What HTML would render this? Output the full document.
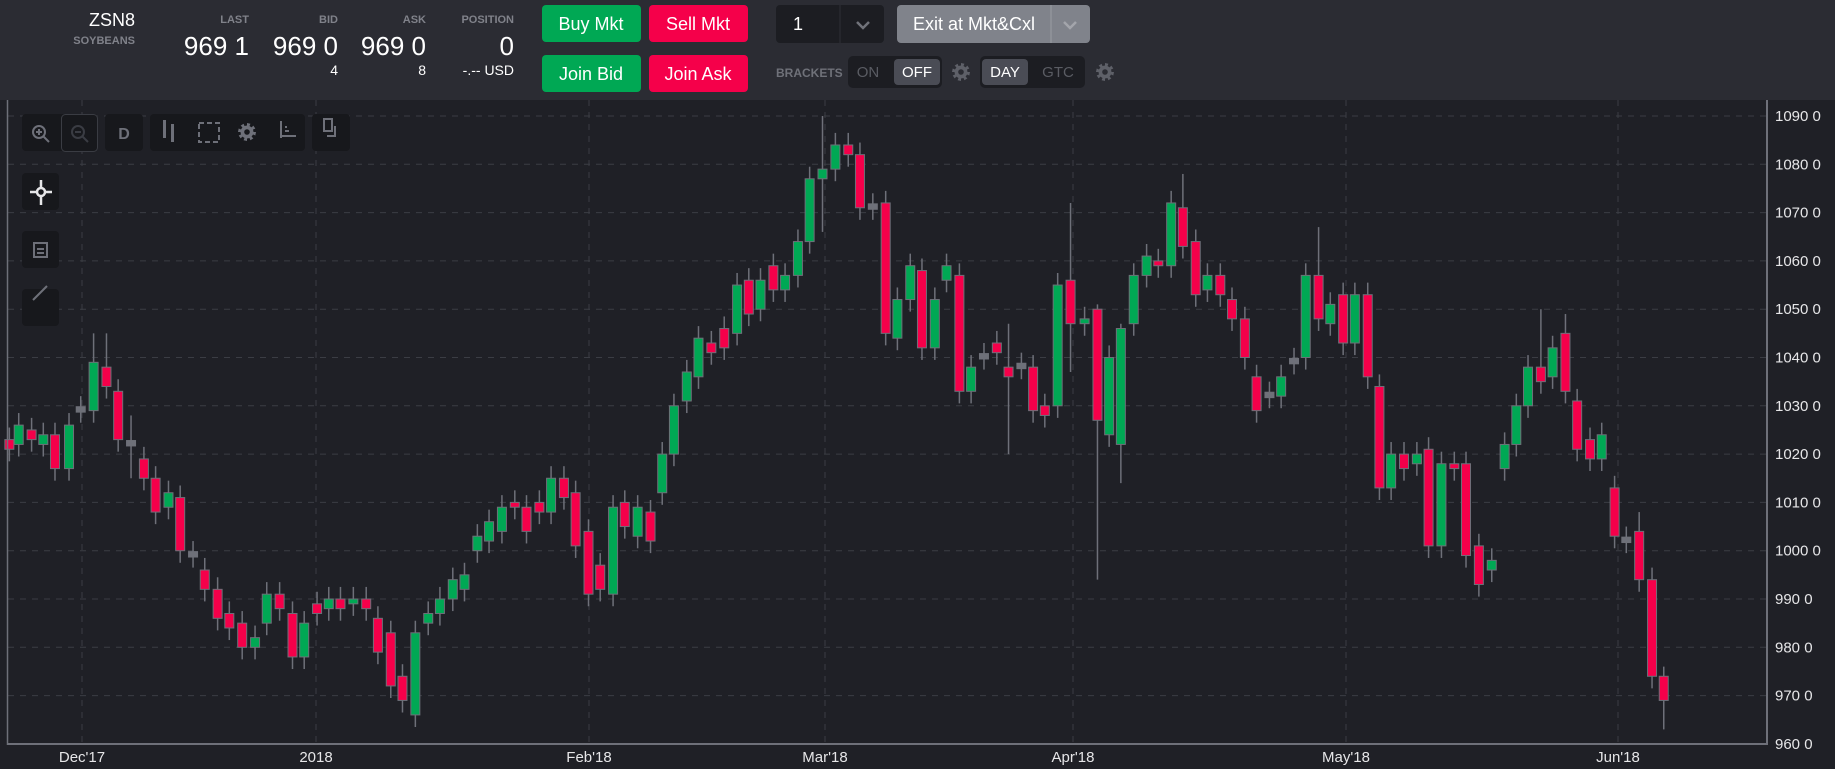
<!DOCTYPE html>
<html><head><meta charset="utf-8"><style>
html,body{margin:0;padding:0;background:#1f2026;width:1835px;height:769px;overflow:hidden;font-family:"Liberation Sans",sans-serif}
</style></head><body>
<svg id="s" width="1835" height="769" xmlns="http://www.w3.org/2000/svg" font-family="Liberation Sans, sans-serif">
<rect width="1835" height="769" fill="#1f2026"/>
<rect width="1835" height="100" fill="#2b2c33"/>
<text x="135" y="26" fill="#fff" font-size="18" text-anchor="end">ZSN8</text>
<text x="135" y="44" fill="#80828a" font-size="11" font-weight="bold" text-anchor="end">SOYBEANS</text>
<g font-size="11" fill="#80828a" font-weight="bold" text-anchor="end">
<text x="249" y="23">LAST</text><text x="338" y="23">BID</text><text x="426" y="23">ASK</text><text x="514" y="23">POSITION</text></g>
<g font-size="26" fill="#fff" text-anchor="end">
<text x="249" y="55">969 1</text><text x="338" y="55">969 0</text><text x="426" y="55">969 0</text><text x="514" y="55">0</text></g>
<g font-size="14" fill="#fff" text-anchor="end">
<text x="338" y="75">4</text><text x="426" y="75">8</text><text x="514" y="75">-.-- USD</text></g>
<rect x="542" y="5" width="99" height="37" rx="4" fill="#00a854"/><text x="591" y="30" font-size="18" fill="#fff" text-anchor="middle">Buy Mkt</text>
<rect x="649" y="5" width="99" height="37" rx="4" fill="#f5004a"/><text x="698" y="30" font-size="18" fill="#fff" text-anchor="middle">Sell Mkt</text>
<rect x="542" y="55" width="99" height="37" rx="4" fill="#00a854"/><text x="591" y="80" font-size="18" fill="#fff" text-anchor="middle">Join Bid</text>
<rect x="649" y="55" width="99" height="37" rx="4" fill="#f5004a"/><text x="698" y="80" font-size="18" fill="#fff" text-anchor="middle">Join Ask</text>
<rect x="776" y="5" width="108" height="38" rx="4" fill="#1c1d22"/><line x1="840" y1="5" x2="840" y2="43" stroke="#2e2f36"/>
<text x="793" y="30" font-size="18" fill="#fff">1</text>
<path d="M857 22l6 6 6-6" stroke="#70727a" stroke-width="2.5" fill="none"/>
<rect x="897" y="5" width="193" height="38" rx="4" fill="#80838b"/><line x1="1051" y1="5" x2="1051" y2="43" stroke="#9a9ca3"/>
<text x="974" y="30" font-size="18" fill="#fff" text-anchor="middle">Exit at Mkt&amp;Cxl</text>
<path d="M1064 22l6 6 6-6" stroke="#a3a5ab" stroke-width="2.5" fill="none"/>
<text x="776" y="77" font-size="12" font-weight="bold" fill="#6f7179">BRACKETS</text>
<rect x="848" y="56" width="94" height="32" rx="5" fill="#1c1d22"/>
<text x="868" y="77" font-size="15" fill="#5a5c63" text-anchor="middle">ON</text>
<rect x="894" y="59" width="46" height="26" rx="4" fill="#4a4c55"/><text x="917" y="77" font-size="15" fill="#fff" text-anchor="middle">OFF</text>
<rect x="980" y="56" width="105" height="32" rx="5" fill="#1c1d22"/>
<rect x="982" y="59" width="46" height="26" rx="4" fill="#4a4c55"/><text x="1005" y="77" font-size="15" fill="#fff" text-anchor="middle">DAY</text>
<text x="1058" y="77" font-size="15" fill="#5a5c63" text-anchor="middle">GTC</text>
<g id="grid"></g>
<g id="candles"></g>
<line x1="7.5" y1="100" x2="7.5" y2="745" stroke="#6e7079" stroke-width="1.5"/>
<line x1="1767" y1="100" x2="1767" y2="745" stroke="#6e7079" stroke-width="2"/>
<line x1="7" y1="744" x2="1768" y2="744" stroke="#6e7079" stroke-width="2"/>
<g id="plabels" font-size="15" fill="#e6e6e8"></g>
<g font-size="15" fill="#e6e6e8" text-anchor="middle">
<text x="82" y="762">Dec'17</text><text x="316" y="762">2018</text><text x="589" y="762">Feb'18</text><text x="825" y="762">Mar'18</text><text x="1073" y="762">Apr'18</text><text x="1346" y="762">May'18</text><text x="1618" y="762">Jun'18</text></g>
<g fill="#17181c">
<rect x="22" y="114" width="76" height="37" rx="4"/><rect x="105" y="114" width="38" height="37" rx="4"/>
<rect x="150" y="114" width="155" height="37" rx="4"/><rect x="312" y="114" width="38" height="37" rx="4"/>
<rect x="22" y="173" width="37" height="37" rx="4"/><rect x="22" y="231" width="37" height="37" rx="4"/><rect x="22" y="289" width="37" height="37" rx="4"/></g>
<rect x="61.5" y="114.5" width="36" height="37" rx="4" fill="none" stroke="#3a3c43"/>
<g stroke="#6e7079" stroke-width="2" fill="none">
<circle cx="39" cy="132" r="6"/><path d="M43 136l6 6M36 132h6M39 129v6"/>
<circle cx="78" cy="132" r="6" stroke="#3a3c43"/><path d="M82 136l6 6M75 132h6" stroke="#3a3c43"/>
<rect x="199" y="123" width="20" height="19" stroke-dasharray="5 3"/>
<path d="M281 121v17M281 136h15M285 131h4M285 127h2"/>
<path d="M324 119h8v12h-8zM335 126v10h-8"/>
<path d="M33 300l14-14"/>
<rect x="34" y="243" width="13" height="14"/><path d="M37 249h7M37 253h7"/>
</g>
<g fill="#6e7079"><rect x="163" y="120" width="3" height="18"/><rect x="171" y="124" width="3" height="18"/></g>
<text x="124" y="139" font-size="16" font-weight="bold" fill="#6e7079" text-anchor="middle">D</text>
<g stroke="#e6e6e8" stroke-width="2.5" fill="none"><circle cx="41" cy="192" r="4"/><path d="M41 180v8M41 196v9M30 192h7M45 192h7"/></g>
<g id="gears"></g>
</svg>
<script>
var NS="http://www.w3.org/2000/svg";
function el(p,t,a){var e=document.createElementNS(NS,t);for(var k in a)e.setAttribute(k,a[k]);p.appendChild(e);return e;}
function Y(p){return 116+(1090-p)*4.83;}
var g=document.getElementById('grid'),pl=document.getElementById('plabels');
for(var p=960;p<=1090;p+=10){var y=Y(p);if(p>960)el(g,'line',{x1:8,y1:y,x2:1766,y2:y,stroke:'#3b3d44','stroke-dasharray':'6 6'});
var t=el(pl,'text',{x:1775,y:y+5});t.textContent=p+' 0';}
[82,316,589,825,1073,1346,1618].forEach(function(x){el(g,'line',{x1:x,y1:100,x2:x,y2:744,stroke:'#3b3d44','stroke-dasharray':'6 6'});});
var d=[[8,1023,1021],[16,1022,1026],[27,1025,1023],[37,1022,1024],[47,1024,1017],[59,1017,1026],[69,1029,1029.5],[80,1029,1039,1045],[91,1038,1034,1045],[101,1033,1023],[112,1022,1022.5,1028,1015],[123,1019,1015],[133,1015,1008],[144,1009,1012],[154,1011,1000],[165,999,999.5],[175,996,992],[186,992,986],[196,987,984],[207,985,980],[218,980,982],[228,985,991],[239,991,988],[250,987,978],[260,978,985],[271,989,987],[281,988,990],[291,990,988],[302,989,990],[313,990,988],[323,986,979],[334,983,972],[344,974,969],[355,966,983],[366,985,987],[376,987,990],[387,990,994],[397,992,995],[408,1000,1003],[418,1002,1006],[429,1004,1009],[440,1010,1009],[450,1009,1004],[461,1010,1008],[471,1008,1015],[482,1015,1011],[492,1012,1001],[503,1004,991],[513,997,992],[524,991,1009],[534,1010,1005],[545,1003,1009],[556,1008,1002],[566,1012,1020],[576,1020,1030],[587,1031,1037],[597,1036,1044],[608,1043,1041],[619,1046,1042],[630,1045,1055],[640,1056,1049],[650,1050,1056],[661,1059,1054],[671,1054,1057],[682,1057,1064],[692,1064,1077],[703,1077,1079,1090,1066],[714,1079,1084],[725,1084,1082],[735,1082,1071],[746,1071.5,1071],[757,1072,1045],[767,1044,1052],[778,1052,1059],[788,1058,1042],[799,1042,1052],[809,1056,1059],[820,1057,1033],[830,1033,1038],[841,1040,1040.5],[852,1043,1041],[862,1038,1036,1047,1020],[873,1038,1038.5],[883,1038,1029],[893,1030,1028],[904,1030,1055],[915,1056,1047,1072,1037],[927,1047,1048],[938,1050,1027,1051,994],[948,1024,1040],[958,1022,1046,1047,1014],[969,1047,1057],[980,1057,1061],[990,1060,1059],[1001,1059,1072],[1011,1071,1063,1078],[1022,1064,1053],[1032,1054,1057],[1043,1057,1053],[1053,1052,1048],[1064,1048,1040],[1074,1036,1029],[1085,1032,1032.5],[1095,1032,1036],[1106,1039,1039.5],[1116,1040,1057],[1127,1057,1048,1067],[1137,1047,1051],[1148,1053,1043],[1158,1043,1053],[1169,1053,1036],[1179,1034,1013],[1189,1013,1020],[1200,1020,1017],[1211,1018,1020],[1221,1021,1001],[1232,1001,1018],[1243,1018,1017],[1253,1018,999],[1264,1001,993],[1275,996,998],[1286,1017,1022],[1296,1022,1030],[1306,1030,1038],[1317,1038,1035,1050],[1327,1036,1042],[1338,1045,1033,1049],[1348,1031,1021],[1359,1023,1019],[1369,1019,1024],[1380,1013,1003],[1390,1002,1002.5],[1401,1004,994,1008],[1412,994,974],[1422,974,969,976,963]];
var c=document.getElementById('candles'),s=1.170;
d.forEach(function(a){var x=a[0]*s,o=a[1],cl=a[2],hi=a[3]||Math.max(o,cl)+2.5,lo=a[4]||Math.min(o,cl)-2.5;
el(c,'line',{x1:x,y1:Y(hi),x2:x,y2:Y(lo),stroke:'#6e7079','stroke-width':1.5});
var t=Y(Math.max(o,cl)),b=Y(Math.min(o,cl));if(b-t<3){t-=1.5;b+=1.5;}
var col=Math.abs(o-cl)<1?'#6e7079':(cl>o?'#00a854':'#f5004a');
el(c,'rect',{x:x-4.5,y:t,width:9,height:b-t,fill:col,stroke:'#6e7079','stroke-width':1});});
function gearPath(cx,cy,R,r,n){var s='';for(var i=0;i<n*2;i++){var a1=(i/(n*2))*Math.PI*2,a2=((i+1)/(n*2))*Math.PI*2,rad=i%2?r:R;
s+=(i?'L':'M')+(cx+rad*Math.cos(a1)).toFixed(2)+' '+(cy+rad*Math.sin(a1)).toFixed(2)+'L'+(cx+rad*Math.cos(a2)).toFixed(2)+' '+(cy+rad*Math.sin(a2)).toFixed(2);}
return s+'Z';}
var gs=document.getElementById('gears');
[[961,72,'#5e6068','#2b2c33'],[1105,72,'#5e6068','#2b2c33'],[247,132,'#6e7079','#17181c']].forEach(function(q){
el(gs,'path',{d:gearPath(q[0],q[1],9,6.5,8),fill:q[2]});el(gs,'circle',{cx:q[0],cy:q[1],r:2.8,fill:q[3]});});
</script>
</body></html>
